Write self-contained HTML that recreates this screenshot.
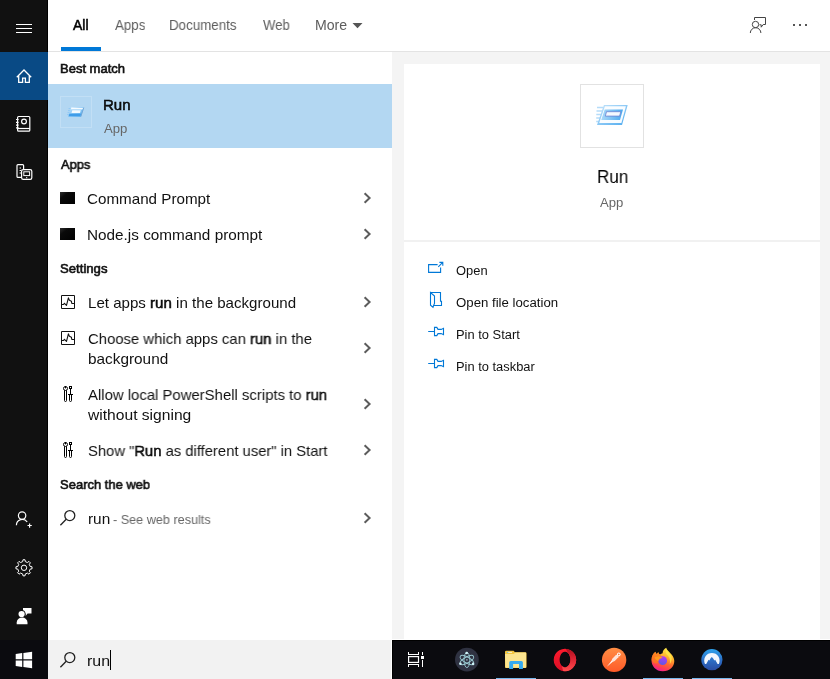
<!DOCTYPE html>
<html><head><meta charset="utf-8">
<style>
*{box-sizing:border-box;margin:0;padding:0}
html,body{width:830px;height:679px;overflow:hidden;background:#f4f4f4;font-family:"Liberation Sans",sans-serif;color:#000}
.abs{position:absolute}
#sidebar{left:0;top:0;width:48px;height:640px;background:#111}
#home{left:0;top:52px;width:48px;height:48px;background:#094a85}
#start{left:0;top:640px;width:48px;height:39px;background:#0b0b0f}
#header{left:48px;top:0;width:782px;height:51px;background:#fff}
#hline{left:48px;top:51px;width:782px;height:1px;background:#e3e3e3}
#tabul{left:61px;top:47px;width:40px;height:4px;background:#0078d7}
#left{left:48px;top:52px;width:344px;height:588px;background:#fff}
#sel{left:48px;top:84px;width:344px;height:64px;background:#b3d7f2}
#selbox{left:60px;top:96px;width:32px;height:32px;border:1px solid #c2dff5}
#card{left:404px;top:64px;width:416px;height:576px;background:#fff}
#sep{left:404px;top:240px;width:416px;height:2px;background:#f1f1f1}
#iconbox{left:580px;top:84px;width:64px;height:64px;border:1px solid #e2e2e2;background:#fff}
#search{left:48px;top:640px;width:343px;height:39px;background:#f2f2f2}
#wrow{left:392px;top:639px;width:438px;height:1px;background:#fff}
#wcol{left:391px;top:640px;width:1px;height:39px;background:#fff}
#caret{left:110px;top:650px;width:1px;height:20px;background:#000}
#taskbar{left:392px;top:640px;width:438px;height:39px;background:#0b0b0f;border-top:1px solid #000;border-left:1px solid #000}
.ind{position:absolute;top:677.5px;height:1.5px;width:39.6px;background:#76b9ed}
.t{will-change:transform;position:absolute;white-space:nowrap;transform-origin:0 50%;line-height:20px}
.tab{font-size:14px;color:#5d5d5d}
.h{font-size:13px;font-weight:normal;color:#111;-webkit-text-stroke:0.6px #111}
.i{font-size:15px;color:#111}
.a{font-size:13px;color:#111}
.a12{font-size:12px;color:#111}
.g{color:#666}
b,.sb{font-weight:normal;-webkit-text-stroke:0.5px #000}
svg{position:absolute;left:0;top:0;overflow:visible}
</style></head><body>
<div class="abs" id="sidebar"></div>
<div class="abs" style="left:47px;top:0;width:1px;height:640px;background:#000"></div>
<div class="abs" id="home"></div>
<div class="abs" id="start"></div>
<div class="abs" id="header"></div>
<div class="abs" id="hline"></div>
<div class="abs" id="tabul"></div>
<div class="abs" id="left"></div>
<div class="abs" id="sel"></div>
<div class="abs" id="selbox"></div>
<div class="abs" id="card"></div>
<div class="abs" id="sep"></div>
<div class="abs" id="iconbox"></div>
<div class="abs" id="search"></div>
<div class="abs" id="wrow"></div>
<div class="abs" id="wcol"></div>
<div class="abs" id="caret"></div>
<div class="abs" id="taskbar"></div>
<div class="ind" style="left:496.2px"></div>
<div class="ind" style="left:643.3px"></div>
<div class="ind" style="left:692px"></div>

<span class="t tab sb" style="left:73.00px;top:15px;color:#000;transform:scaleX(1.0000)">All</span>
<span class="t tab" style="left:115.00px;top:15px;transform:scaleX(0.9516)">Apps</span>
<span class="t tab" style="left:169.00px;top:15px;transform:scaleX(0.9529)">Documents</span>
<span class="t tab" style="left:263.00px;top:15px;transform:scaleX(0.9393)">Web</span>
<span class="t tab" style="left:315.00px;top:15px;transform:scaleX(1.0083)">More</span>
<span class="t h" style="left:60.00px;top:59px;transform:scaleX(0.9969)">Best match</span>
<span class="t i sb" style="left:103.00px;top:95px;transform:scaleX(1.0000)">Run</span>
<span class="t a g" style="left:104.00px;top:119px;transform:scaleX(1.0109)">App</span>
<span class="t h" style="left:61.00px;top:155px;transform:scaleX(0.9833)">Apps</span>
<span class="t i" style="left:87.00px;top:189px;transform:scaleX(1.0125)">Command Prompt</span>
<span class="t i" style="left:87.00px;top:225px;transform:scaleX(1.0206)">Node.js command prompt</span>
<span class="t h" style="left:60.00px;top:259px;transform:scaleX(1.0109)">Settings</span>
<span class="t i" style="left:88.00px;top:293px;transform:scaleX(1.0061)">Let apps <b>run</b> in the background</span>
<span class="t i" style="left:88.00px;top:329px;transform:scaleX(0.9911)">Choose which apps can <b>run</b> in the</span>
<span class="t i" style="left:88.00px;top:349px;transform:scaleX(1.0230)">background</span>
<span class="t i" style="left:88.00px;top:385px;transform:scaleX(0.9927)">Allow local PowerShell scripts to <b>run</b></span>
<span class="t i" style="left:88.00px;top:405px;transform:scaleX(1.0408)">without signing</span>
<span class="t i" style="left:88.00px;top:441px;transform:scaleX(0.9855)">Show "<b>Run</b> as different user" in Start</span>
<span class="t h" style="left:60.00px;top:475px;transform:scaleX(0.9972)">Search the web</span>
<span class="t i" style="left:88.00px;top:509px;transform:scaleX(1.0250)">run</span>
<span class="t a g" style="left:113.00px;top:510px;transform:scaleX(0.9722)">- See web results</span>
<span class="t i" style="left:87.00px;top:651px;transform:scaleX(1.0625)">run</span>
<span class="t " style="left:597.00px;top:167px;font-size:18px;transform:scaleX(0.9484)">Run</span>
<span class="t a g" style="left:600.00px;top:193px;transform:scaleX(1.0087)">App</span>
<span class="t a12" style="left:456.00px;top:260.7px;transform:scaleX(1.0750)">Open</span>
<span class="t a12" style="left:456.00px;top:292.7px;transform:scaleX(1.1011)">Open file location</span>
<span class="t a12" style="left:456.00px;top:324.7px;transform:scaleX(1.0741)">Pin to Start</span>
<span class="t a12" style="left:456.00px;top:356.7px;transform:scaleX(1.0736)">Pin to taskbar</span>
<svg width="830" height="679" viewBox="0 0 830 679">
<defs>
<linearGradient id="cmdg" x1="0" y1="0" x2="1" y2="1"><stop offset="0" stop-color="#2e2e2e"/><stop offset="0.3" stop-color="#0a0a0a"/><stop offset="1" stop-color="#000"/></linearGradient>
<linearGradient id="rung" x1="0" y1="0" x2="1" y2="1"><stop offset="0" stop-color="#c6e5fb"/><stop offset="1" stop-color="#4fabef"/></linearGradient>
<linearGradient id="rung2" x1="0" y1="0" x2="1" y2="0"><stop offset="0" stop-color="#a9d8f8"/><stop offset="1" stop-color="#4aa8ee"/></linearGradient>
<linearGradient id="opg" x1="0" y1="0" x2="0" y2="1"><stop offset="0" stop-color="#ff1b2d"/><stop offset="1" stop-color="#d80f26"/></linearGradient>
<linearGradient id="opr" x1="0" y1="0" x2="0" y2="1"><stop offset="0" stop-color="#a80d1c"/><stop offset="0.45" stop-color="#dc2433"/><stop offset="1" stop-color="#ff4f4f"/></linearGradient>
<linearGradient id="pmg" x1="0" y1="0" x2="0" y2="1"><stop offset="0" stop-color="#ff8e44"/><stop offset="1" stop-color="#ff5a28"/></linearGradient>
<linearGradient id="ffg" x1="0.75" y1="0" x2="0.35" y2="1"><stop offset="0" stop-color="#fff24e"/><stop offset="0.35" stop-color="#ffb62e"/><stop offset="0.62" stop-color="#ff6a2e"/><stop offset="0.85" stop-color="#ff3a58"/><stop offset="1" stop-color="#ee1f9c"/></linearGradient>
<linearGradient id="ffp" x1="0.5" y1="0" x2="0.3" y2="1"><stop offset="0" stop-color="#b13cf6"/><stop offset="1" stop-color="#5b59e2"/></linearGradient>
<linearGradient id="nvg" x1="0" y1="0" x2="0" y2="1"><stop offset="0" stop-color="#2ea2ec"/><stop offset="0.55" stop-color="#2c6cc4"/><stop offset="1" stop-color="#2a4ca2"/></linearGradient>
<linearGradient id="fog" x1="0" y1="0" x2="0" y2="1"><stop offset="0" stop-color="#ffe08a"/><stop offset="1" stop-color="#f6c544"/></linearGradient>
</defs>

<!-- sidebar icons -->
<g fill="#fff">
<rect x="16" y="24" width="16" height="1"/><rect x="16" y="28" width="16" height="1"/><rect x="16" y="32" width="16" height="1"/>
</g>
<g fill="none" stroke="#fff" stroke-width="1.3">
<path d="M16.8 77.2 L24 70 L31.2 77.2"/>
<path d="M18.7 76 V82.4 H22.6 V78.2 H25.4 V82.4 H29.3 V76"/>
</g>
<!-- notebook -->
<g fill="none" stroke="#fff" stroke-width="1.2">
<rect x="17.6" y="116.5" width="12.2" height="14.7" rx="1"/>
<path d="M17.6 128.5 H29.8"/>
<circle cx="24" cy="121.5" r="2.4"/>
<path d="M16 119.5 H18.6 M16 122.3 H18.6 M16 125.1 H18.6 M16 127.9 H18.6"/>
</g>
<!-- devices -->
<g fill="none" stroke="#fff" stroke-width="1.2">
<rect x="17" y="164.6" width="6.6" height="12.8" rx="1"/>
<path d="M20.3 167.5 V168.5 M20.3 170 V171 M20.3 172.5 V173.5" stroke-width="1.4"/>
<rect x="21.6" y="169.6" width="10.2" height="9.8" rx="1.6" fill="#111"/>
<rect x="23.8" y="171.8" width="5.8" height="3.8" stroke-width="1"/>
<path d="M26.2 177.6 H27.2" stroke-width="1.2"/>
</g>
<!-- person plus -->
<g fill="none" stroke="#fff" stroke-width="1.2">
<circle cx="22.1" cy="515.6" r="3.7"/>
<path d="M16.4 525.2 A5.9 5.9 0 0 1 27.2 522"/>
<path d="M27.5 525.5 H31.8 M29.6 523.4 V527.7"/>
</g>
<!-- gear -->
<g fill="none" stroke="#fff" stroke-width="1" stroke-linejoin="round">
<path d="M22.67 561.64 L22.98 559.76 L25.02 559.76 L25.33 561.64 L27.42 562.51 L28.96 561.40 L30.40 562.84 L29.29 564.38 L30.16 566.47 L32.04 566.78 L32.04 568.82 L30.16 569.13 L29.29 571.22 L30.40 572.76 L28.96 574.20 L27.42 573.09 L25.33 573.96 L25.02 575.84 L22.98 575.84 L22.67 573.96 L20.58 573.09 L19.04 574.20 L17.60 572.76 L18.71 571.22 L17.84 569.13 L15.96 568.82 L15.96 566.78 L17.84 566.47 L18.71 564.38 L17.60 562.84 L19.04 561.40 L20.58 562.51Z"/>
<circle cx="24" cy="567.8" r="2.7"/>
</g>
<!-- feedback filled -->
<g fill="#fff">
<path d="M23 608 H31.5 V613.6 H27.6 L25.6 616 V613.6 H23Z"/>
<circle cx="21.6" cy="614" r="3.9" fill="#111"/>
<circle cx="21.6" cy="614" r="3.1"/>
<path d="M16.7 624.2 V622.6 A5.4 5 0 0 1 27.5 622.6 V624.2Z"/>
</g>
<!-- windows logo -->
<g fill="#fff">
<path d="M15.7 654 L22.2 653.1 V659.2 H15.7Z"/>
<path d="M23.4 652.9 L32.1 651.7 V659.2 H23.4Z"/>
<path d="M15.7 660.4 H22.2 V666.9 L15.7 666Z"/>
<path d="M23.4 660.4 H32.1 V668.3 L23.4 667.1Z"/>
</g>

<!-- tab arrow -->
<path d="M352.5 23 H362.5 L357.5 28.2Z" fill="#555"/>
<!-- header right icons -->
<g fill="none" stroke="#444" stroke-width="1">
<circle cx="755.5" cy="24.5" r="3.2"/>
<path d="M750.3 33 A5.3 5.3 0 0 1 760.9 33"/>
<path d="M754.5 20 V17.5 H765.5 V24.5 H763.2 L761.2 27.2 V24.8 H759.5"/>
</g>
<g fill="#555"><rect x="793" y="24" width="2" height="2"/><rect x="799" y="24" width="2" height="2"/><rect x="805" y="24" width="2" height="2"/></g>

<!-- small run icon -->
<g>
<path d="M68.6 108.6 H71 M68 110.6 H70.4 M67.6 112.6 H70 M67.2 114.6 H69.5" stroke="#8cc6f5" stroke-width="0.9"/>
<path d="M71 106.8 L84 107.4 L81 116.8 L68 116.8Z" fill="url(#rung)"/>
<path d="M71.4 107.4 L83 107.9 L82.4 109.4 L70.9 109.2Z" fill="#fff" opacity="0.9"/>
<path d="M72.3 110.2 L80.8 110.2 L80 112.9 L71.5 112.9Z" fill="#fff" opacity="0.9"/>
<path d="M69.4 113.8 L81 113.8 L80.2 116.2 L68.6 116.2Z" fill="#3f9de9"/>
<path d="M83.8 107.6 L80.8 116.6" stroke="#6f9fd0" stroke-width="0.8"/>
</g>

<!-- cmd icons -->
<rect x="60" y="192" width="15" height="12" fill="url(#cmdg)"/>
<rect x="60" y="228" width="15" height="12" fill="url(#cmdg)"/>

<!-- chevrons -->
<g fill="none" stroke="#5c5c5c" stroke-width="2">
<path d="M364.6 193.2 L369.6 198 L364.6 202.8"/>
<path d="M364.6 229.2 L369.6 234 L364.6 238.8"/>
<path d="M364.6 297.2 L369.6 302 L364.6 306.8"/>
<path d="M364.6 343.2 L369.6 348 L364.6 352.8"/>
<path d="M364.6 399.2 L369.6 404 L364.6 408.8"/>
<path d="M364.6 445.2 L369.6 450 L364.6 454.8"/>
<path d="M364.6 513.2 L369.6 518 L364.6 522.8"/>
</g>

<!-- settings chart icons -->
<g fill="none" stroke="#111" stroke-width="1" stroke-linejoin="round">
<rect x="61.5" y="295.5" width="13" height="13"/>
<path d="M61.5 304.5 H63.5 L64.4 303.3 L66.5 305.4 L68.4 297.9 L69.4 300.3 L71.4 301.2 L71.8 303.5 H74.5" stroke-width="1.1"/>
<rect x="61.5" y="331.5" width="13" height="13"/>
<path d="M61.5 340.5 H63.5 L64.4 339.3 L66.5 341.4 L68.4 333.9 L69.4 336.3 L71.4 337.2 L71.8 339.5 H74.5" stroke-width="1.1"/>
</g>
<!-- tools icons -->
<g id="tools" fill="none" stroke="#000" stroke-width="1">
<circle cx="65.5" cy="388.5" r="2"/>
<path d="M65.5 386 V388.4"/>
<path d="M64.5 390.3 V400.5 Q64.5 401.5 65.5 401.5 Q66.5 401.5 66.5 400.5 V390.3"/>
<rect x="69.5" y="386.5" width="2" height="2"/>
<path d="M70.5 389 V394 M68 394.5 H73"/>
<path d="M69.5 395 V400.5 Q69.5 401.5 70.5 401.5 Q71.5 401.5 71.5 400.5 V395"/>
</g>
<use href="#tools" y="56"/>

<!-- search icons -->
<g fill="none" stroke="#222" stroke-width="1.3">
<circle cx="69.8" cy="515.6" r="5"/><path d="M66.2 519.3 L60.4 525.2"/>
<circle cx="69.8" cy="657.6" r="5"/><path d="M66.2 661.3 L60.4 667.2"/>
</g>

<!-- big run icon -->
<g>
<path d="M597 107.5 H603 M596.5 111 H602 M596.3 114.5 H601 M596.2 118 H600 M596.2 121.5 H599" stroke="#b5dcf9" stroke-width="1.3"/>
<path d="M603.9 105.1 L627.7 105.1 L622 125.1 L597 125.1Z" fill="url(#rung)"/>
<path d="M604.9 106.3 L625.9 106.3 L621.4 123 L599.2 123Z" fill="#fff" opacity="0.95"/>
<path d="M604.7 109.6 L623 109.6 L620 120.1 L601.2 120.1Z" fill="url(#rung2)"/>
<path d="M606.5 111.7 L620.8 111.7 L619.6 116.1 L605.3 116.1Z" fill="#f4f9ff" stroke="#6c82d2" stroke-width="0.8"/>
</g>

<!-- action icons -->
<g fill="none" stroke="#0078d7" stroke-width="1.1">
<path d="M437.6 264.6 H428.6 V272.4 H440.6 V267.5"/>
<path d="M438.3 266.8 L442.7 262.4 M439.4 262.4 H442.8 V265.8"/>
<path d="M430.5 292.5 H440.5 V301.2 H441.5 V305.5 H433.6"/>
<path d="M430.5 292.5 V305.3 L433 307.3 L433.6 305.5 L434.5 303.5 V296 Z"/>
<path d="M428.2 331.5 H434.5 M434.5 327.4 H436.8 L438 329.4 H441.2 L443.5 328.3 V334.7 L441.2 333.6 H438 L436.8 335.6 H434.5Z"/>
<path d="M428.2 363.5 H434.5 M434.5 359.4 H436.8 L438 361.4 H441.2 L443.5 360.3 V366.7 L441.2 365.6 H438 L436.8 367.6 H434.5Z"/>
</g>

<!-- taskbar: task view -->
<g fill="#fff" shape-rendering="crispEdges">
<rect x="408" y="652" width="1" height="3"/><rect x="418" y="652" width="1" height="3"/><rect x="408" y="654" width="11" height="1"/>
<rect x="408" y="664" width="11" height="1"/><rect x="408" y="664" width="1" height="3"/><rect x="418" y="664" width="1" height="3"/>
<rect x="422" y="652" width="1" height="3"/><rect x="421" y="656" width="3" height="3"/><rect x="422" y="660" width="1" height="7"/>
</g>
<rect x="408.6" y="656.6" width="9.9" height="5.8" fill="none" stroke="#fff" stroke-width="1.2"/>
<!-- electron -->
<circle cx="466.9" cy="659.7" r="11.9" fill="#2f3241"/>
<g fill="none" stroke="#a4d8df" stroke-width="0.9" opacity="0.9">
<ellipse cx="466.9" cy="660" rx="7.6" ry="2.9" transform="rotate(90 466.9 660)"/>
<ellipse cx="466.9" cy="660" rx="7.6" ry="2.9" transform="rotate(30 466.9 660)"/>
<ellipse cx="466.9" cy="660" rx="7.6" ry="2.9" transform="rotate(150 466.9 660)"/>
</g>
<g fill="#cdf1f5"><circle cx="466.9" cy="659.9" r="0.8" opacity="0.7"/><circle cx="466.7" cy="653" r="1.3"/><circle cx="460.4" cy="663.8" r="1.3"/><circle cx="473.1" cy="663.9" r="1.3"/></g>
<!-- explorer -->
<g>
<path d="M505 652 Q505 650.8 506.2 650.8 H513.6 L515 652.2 H525.4 Q526.5 652.2 526.5 653.3 V667 Q526.5 668.1 525.4 668.1 H506.1 Q505 668.1 505 667Z" fill="#f4c63f"/>
<path d="M505 653.9 H514 L515 652.6 H525.4 Q526.1 652.6 526.1 653.4 V667 Q526.1 667.8 525.4 667.8 H506.1 Q505.4 667.8 505.4 667 Z" fill="#fde58f"/>
<rect x="507" y="651.9" width="5" height="1" fill="#fff" opacity="0.75"/>
<rect x="507" y="651.9" width="1.2" height="1" fill="#5cc3e8"/>
<path d="M509.2 669 V662.4 Q509.2 660.9 510.7 660.9 H521.4 Q522.9 660.9 522.9 662.4 V669 H519 V663.9 H513.1 V669Z" fill="#35aaf0"/>
</g>
<!-- opera -->
<clipPath id="opring"><path clip-rule="evenodd" d="M564.95 648.7 a11.25 11.25 0 1 0 0.01 0Z M565 651.8 a5.4 7.8 0 1 0 0.01 0Z"/></clipPath>
<g clip-path="url(#opring)">
<rect x="553" y="648" width="24" height="24" fill="url(#opg)"/>
<path d="M565.5 648 L578 648 L578 672 L563.5 672 L562 667 L565 660 L567.5 652Z" fill="url(#opr)"/>
</g>
<!-- postman -->
<circle cx="614.1" cy="659.9" r="12.2" fill="url(#pmg)"/>
<g transform="translate(613.2 660.2) rotate(-46)" fill="#fff">
<path d="M-9.2 0 L-1.5 -0.8 V0.8Z"/>
<path d="M-1.8 -0.8 L0.5 -1.7 H5.6 L6.4 -0.9 V0.9 L5.6 1.7 H0.5 L-1.8 0.8Z" opacity="0.8"/>
<circle cx="8" cy="0" r="1.4" fill="none" stroke="#fff" stroke-width="1"/>
</g>
<!-- firefox -->
<g>
<path d="M662.8 671.2 C655.8 671.2 651.5 666.2 651.5 660.2 C651.5 656.4 653 653.6 655.5 651.7 C655.7 652.9 656.2 653.7 656.9 654.1 C657.2 653.2 657.7 652.6 658.4 652.2 C658.6 653.3 659.2 654.1 660 654.6 C660.8 654.1 661.7 653.6 662.6 653.3 C662.6 651 664.2 648.9 666.2 647.8 C666.8 650 668.6 651.4 670.4 653.2 C672.8 655.6 674.3 658 674.3 661 C674.3 666.8 669.8 671.2 662.8 671.2Z" fill="url(#ffg)"/>
<path d="M651.6 660 C651.6 656.4 653 653.6 655.5 651.7 C655.7 652.9 656.2 653.7 656.9 654.1 C657.2 653.2 657.7 652.6 658.4 652.2 C658.6 653.3 659.2 654.1 660 654.6 L662 657 L658 663 C655 664 652.5 663 651.6 660Z" fill="#ff7a1f" opacity="0.75"/>
<path d="M666.4 649.2 C667.4 651.4 669.4 652.8 670.6 654.6 C672.4 657.4 672 661.6 669.6 664.6 C670.8 660.4 669.6 656.6 666.8 654.4 C665.4 653.2 665.6 651 666.4 649.2Z" fill="#ffe94a" opacity="0.8"/>
<circle cx="662.7" cy="660.7" r="4.4" fill="url(#ffp)"/>
<path d="M654.6 657.2 C657.4 656 661.2 656.4 662.6 658 C660.6 658 658.9 659.2 658.3 661 C656.6 660.4 654.9 659 654.6 657.2Z" fill="#ff9a1f"/>
</g>
<!-- nordvpn -->
<circle cx="711.9" cy="659.7" r="10.6" fill="url(#nvg)"/>
<path d="M705 664 A7.7 7.7 0 1 1 718.8 664 L717.6 664 L715.2 659.8 L714.4 660.6 L713 658.2 L711.8 657 L710.6 658.2 L709.4 660.6 L708.6 659.8 L706.2 664Z" fill="#f2f7fd"/>
</svg>
</body></html>
